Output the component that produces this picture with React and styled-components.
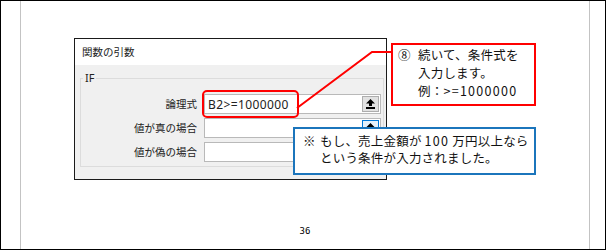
import React from 'react';
import styled, { createGlobalStyle } from 'styled-components';

const Global = createGlobalStyle`
  html, body { margin: 0; padding: 0; background: #fff; }
  body { font-family: "Noto Sans CJK JP", "Noto Sans", sans-serif; color: #000; }
`;

const Frame = styled.div`
  width: 606px;
  height: 250px;
  box-sizing: border-box;
  border: 1px solid #000;
  display: flex;
  background: #fff;
`;

const Sheet = styled.div`
  position: relative;
  margin-left: 19px;
  width: 570px;
  height: 100%;
  box-sizing: border-box;
  border-left: 1px solid #c3c3c3;
  border-right: 1px solid #c3c3c3;
  padding-top: 37px;
  display: flex;
  flex-direction: column;
`;

const Dialog = styled.div`
  margin-left: 53px;
  width: 313px;
  height: 142px;
  box-sizing: border-box;
  border: 1px solid #1a1a1a;
  display: flex;
  flex-direction: column;
  background: #f0f0f0;
`;

const TitleBar = styled.div`
  height: 26px;
  background: #fff;
  padding-left: 7px;
  font-size: 10.5px;
  line-height: 26px;
  color: #222;
`;

const DialogBody = styled.div`
  flex: 1;
  padding: 6px 2px 0 5px;
`;

const Group = styled.fieldset`
  margin: 0;
  padding: 9px 0 4px 0;
  border: 1px solid #dcdcdc;
  min-width: 0;
`;

const GroupTitle = styled.legend`
  margin-left: 2px;
  padding: 0 2px;
  font-family: "Noto Sans", sans-serif;
  font-size: 11px;
  line-height: 14px;
  color: #222;
`;

const ArgGrid = styled.div`
  display: grid;
  grid-template-columns: 116px 177px;
  column-gap: 7px;
  row-gap: 4px;
  align-items: center;
`;

const ArgLabel = styled.div`
  text-align: right;
  font-size: 10.5px;
  line-height: 20px;
  color: #222;
`;

const ArgInput = styled.div`
  position: relative;
  height: 20px;
  box-sizing: border-box;
  border: 1px solid #b9b9b9;
  background: #fff;
  display: flex;
  align-items: center;
  justify-content: space-between;
  padding-left: 3px;
  font-family: "Noto Sans", sans-serif;
  font-size: 12px;
  letter-spacing: 0.4px;
  color: #222;
`;

const PickButton = styled.div`
  width: 17px;
  height: 16px;
  margin-right: 1px;
  box-sizing: border-box;
  border: 1px solid ${p => (p.$focused ? '#0078d7' : '#adadad')};
  background: ${p => (p.$focused ? '#e5f1fb' : '#e1e1e1')};
  display: flex;
  align-items: center;
  justify-content: center;
`;

const Highlight = styled.div`
  position: absolute;
  left: -3px;
  top: -5px;
  width: 97px;
  height: 28px;
  box-sizing: border-box;
  border: 2px solid #ff0000;
  border-radius: 5px;
  pointer-events: none;
`;

const PageNumber = styled.div`
  margin-top: 45px;
  text-align: center;
  font-family: "DejaVu Sans Mono", monospace;
  font-size: 9px;
  line-height: 12px;
`;

const Connector = styled.svg`
  position: absolute;
  left: 0;
  top: 0;
  width: 100%;
  height: 100%;
  pointer-events: none;
`;

const Callout = styled.div`
  position: absolute;
  left: ${p => p.$left}px;
  top: ${p => p.$top}px;
  width: ${p => p.$w}px;
  height: ${p => p.$h}px;
  box-sizing: border-box;
  border: 2px solid ${p => p.$color};
  background: #fff;
  padding: ${p => p.$pt}px 0 0 ${p => p.$pl}px;
  display: grid;
  grid-template-columns: ${p => p.$marker}px 1fr;
  align-content: start;
  font-size: 12.5px;
  letter-spacing: 0.2px;
  line-height: ${p => p.$lh}px;
  color: #111;
`;

const Marker = styled.div``;
const CalloutText = styled.div`
  white-space: nowrap;
`;

const Digits = styled.span`
  letter-spacing: 1.3px;
`;

const UpArrow = () => (
  <svg width="9" height="10" viewBox="0 0 9 10">
    <path d="M4.5 0 L9 4.5 H6 V7 H3 V4.5 H0 Z" fill="#000" />
    <rect x="0" y="8" width="9" height="2" fill="#000" />
  </svg>
);

export default function App() {
  return (
    <>
      <Global />
      <Frame>
        <Sheet>
          <Dialog>
            <TitleBar>関数の引数</TitleBar>
            <DialogBody>
              <Group>
                <GroupTitle>IF</GroupTitle>
                <ArgGrid>
                  <ArgLabel>論理式</ArgLabel>
                  <ArgInput>
                    <span>B2&gt;=1000000</span>
                    <PickButton><UpArrow /></PickButton>
                    <Highlight />
                  </ArgInput>
                  <ArgLabel>値が真の場合</ArgLabel>
                  <ArgInput>
                    <span />
                    <PickButton $focused><UpArrow /></PickButton>
                  </ArgInput>
                  <ArgLabel>値が偽の場合</ArgLabel>
                  <ArgInput>
                    <span />
                    <PickButton><UpArrow /></PickButton>
                  </ArgInput>
                </ArgGrid>
              </Group>
            </DialogBody>
          </Dialog>
          <PageNumber>36</PageNumber>

          <Connector viewBox="0 0 568 248">
            <polyline points="370,51 351,51 276,107" fill="none" stroke="#ff0000" strokeWidth="2" />
          </Connector>

          <Callout $color="#ff0000" $left={370} $top={42} $w={145} $h={63} $pt={1} $pl={5} $marker={20} $lh={18}>
            <Marker>⑧</Marker>
            <CalloutText>
              続いて、条件式を<br />入力します。<br />例：<Digits>&gt;=1000000</Digits>
            </CalloutText>
          </Callout>

          <Callout $color="#1b75bc" $left={272} $top={126} $w={243} $h={48} $pt={3} $pl={8} $marker={17} $lh={17}>
            <Marker>※</Marker>
            <CalloutText>
              もし、売上金額が <Digits>100</Digits> 万円以上なら<br />という条件が入力されました。
            </CalloutText>
          </Callout>
        </Sheet>
      </Frame>
    </>
  );
}
